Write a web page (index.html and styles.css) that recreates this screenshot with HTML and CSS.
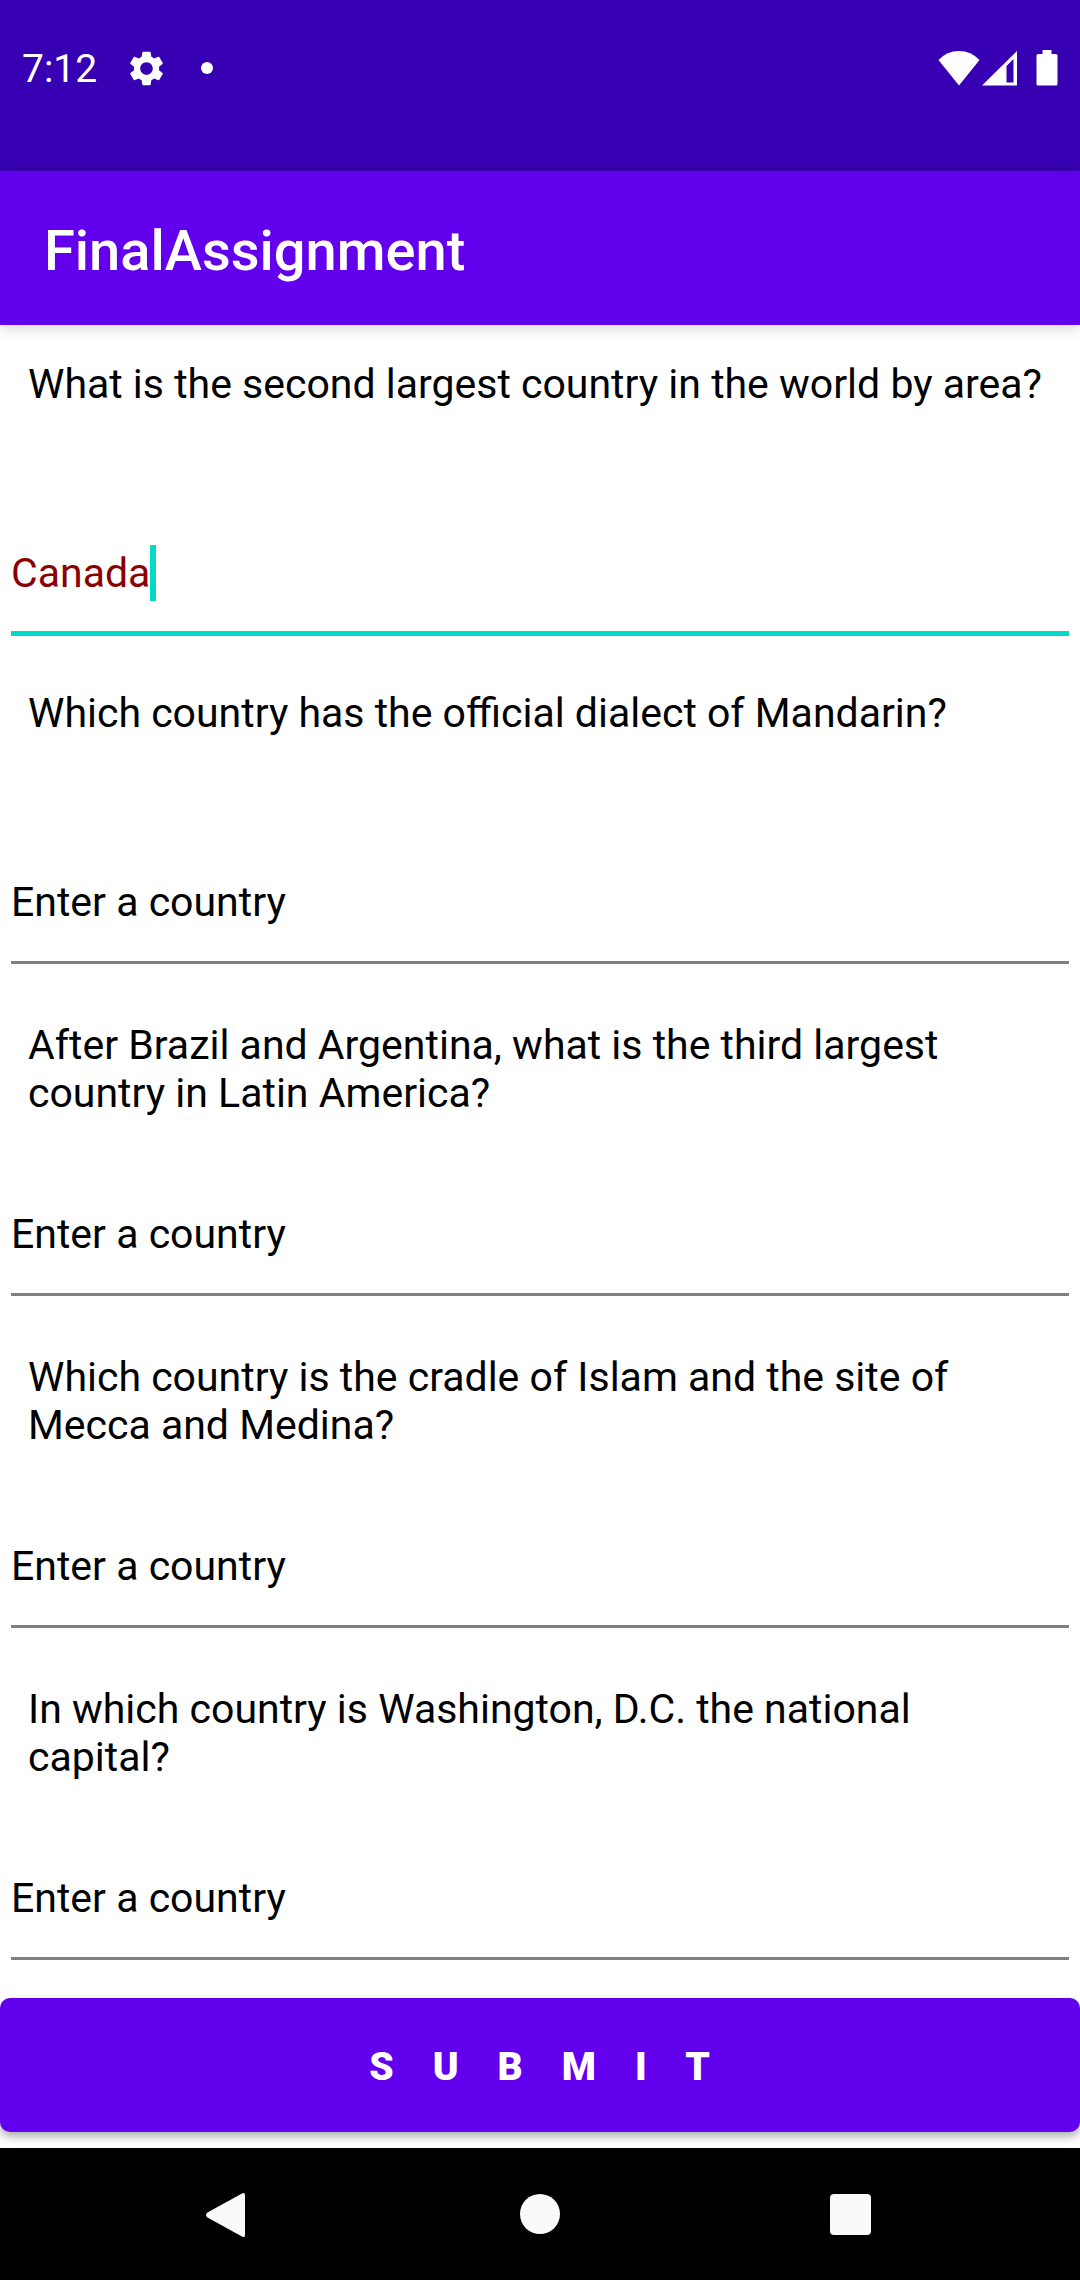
FILE: index.html
```html
<!DOCTYPE html>
<html lang="en">
<head>
<meta charset="utf-8">
<meta name="viewport" content="width=device-width, initial-scale=1">
<title>FinalAssignment</title>
<link rel="stylesheet" href="styles.css">
</head>
<body>
<div class="status-bar">
  <div class="status-left">
    <span class="time">7:12</span>
    <svg class="gear" viewBox="2 2 20 20" aria-hidden="true"><path fill="currentColor" d="M19.14 12.94c.04-.3.06-.61.06-.94 0-.32-.02-.64-.07-.94l2.03-1.58c.18-.14.23-.41.12-.61l-1.92-3.32c-.12-.22-.37-.29-.59-.22l-2.39.96c-.5-.38-1.03-.7-1.62-.94l-.36-2.54c-.04-.24-.24-.41-.48-.41h-3.84c-.24 0-.43.17-.47.41l-.36 2.54c-.59.24-1.13.57-1.62.94l-2.39-.96c-.22-.08-.47 0-.59.22L2.74 8.87c-.12.21-.08.47.12.61l2.03 1.58c-.05.3-.09.63-.09.94s.02.64.07.94l-2.03 1.58c-.18.14-.23.41-.12.61l1.92 3.32c.12.22.37.29.59.22l2.39-.96c.5.38 1.03.7 1.62.94l.36 2.54c.05.24.24.41.48.41h3.84c.24 0 .44-.17.47-.41l.36-2.54c.59-.24 1.13-.56 1.62-.94l2.39.96c.22.08.47 0 .59-.22l1.92-3.32c.12-.22.07-.47-.12-.61l-2.01-1.58zM12 15.6c-1.98 0-3.6-1.62-3.6-3.6s1.62-3.6 3.6-3.6 3.6 1.62 3.6 3.6-1.62 3.6-3.6 3.6z"/></svg>
    <span class="dot"></span>
  </div>
  <div class="status-right">
    <svg class="wifi" viewBox="0 0 42 36" aria-hidden="true"><path fill="currentColor" d="M21 35.500L.5 10Q9 1 21 1t20.500 9z"/></svg>
    <svg class="signal" viewBox="0 0 36 36" aria-hidden="true"><path fill="currentColor" fill-rule="evenodd" d="M0 35.500L35 1v34.500zM24.500 16v16.500H31.500V9z"/></svg>
    <svg class="battery" viewBox="0 0 22 36" aria-hidden="true"><path fill="currentColor" d="M6.500 0h9v4H20q1.500 0 1.500 1.500v28.500q0 1.500-1.500 1.500H2q-1.500 0-1.500-1.500V5.500Q.5 4 2 4h4.500z"/></svg>
  </div>
</div>
<header class="app-bar"><h1>FinalAssignment</h1></header>
<main>
  <form class="quiz">
    <div class="question">
      <label for="q1">What is the second largest country in the world by area?</label>
      <div class="field field-active"><input id="q1" type="text" value="Canada"><span class="caret"></span></div>
    </div>
    <div class="question">
      <label for="q2">Which country has the official dialect of Mandarin?</label>
      <div class="field"><input id="q2" type="text" placeholder="Enter a country"></div>
    </div>
    <div class="question">
      <label for="q3">After Brazil and Argentina, what is the third largest country in Latin America?</label>
      <div class="field"><input id="q3" type="text" placeholder="Enter a country"></div>
    </div>
    <div class="question">
      <label for="q4">Which country is the cradle of Islam and the site of Mecca and Medina?</label>
      <div class="field"><input id="q4" type="text" placeholder="Enter a country"></div>
    </div>
    <div class="question">
      <label for="q5">In which country is Washington, D.C. the national capital?</label>
      <div class="field"><input id="q5" type="text" placeholder="Enter a country"></div>
    </div>
    <button class="submit" type="submit">SUBMIT</button>
  </form>
</main>
<nav class="nav-bar">
  <button type="button" aria-label="Back"><svg viewBox="0 0 44 46" aria-hidden="true"><path fill="currentColor" d="M1.500 20.500L36 1.500Q39 0 39 3v40q0 3-3 1.500L1.500 25.500q-3-2.500 0-5z"/></svg></button>
  <button type="button" aria-label="Home"><svg viewBox="0 0 44 46" aria-hidden="true"><circle fill="currentColor" cx="22" cy="22" r="20"/></svg></button>
  <button type="button" aria-label="Overview"><svg viewBox="0 0 44 46" aria-hidden="true"><rect fill="currentColor" x="0" y="2" width="41" height="41" rx="4"/></svg></button>
</nav>
</body>
</html>
```
FILE: styles.css
```css
* {
  box-sizing: border-box;
}

body {
  margin: 0;
  min-height: 100vh;
  display: flex;
  flex-direction: column;
  background: #fff;
  color: #000;
  font-family: Roboto, "Noto Sans", sans-serif;
  font-size: 41px;
  line-height: 48px;
}

.status-bar {
  display: flex;
  justify-content: space-between;
  padding: 44px 22px 79px;
  background: #3700b3;
  color: #fff;
}

.status-left,
.status-right {
  display: flex;
  align-items: center;
}

.time {
  margin-right: 32px;
  padding-top: 2px;
  font-size: 39px;
  line-height: 46px;
}

.gear {
  width: 35px;
  height: 35px;
  margin-right: 37px;
}

.dot {
  width: 12px;
  height: 12px;
  border-radius: 50%;
  background: currentColor;
}

.wifi {
  width: 42px;
  height: 36px;
  margin-right: 2px;
}

.signal {
  width: 36px;
  height: 36px;
  margin-right: 18px;
}

.battery {
  width: 22px;
  height: 36px;
}

.app-bar {
  padding: 48px 44px 42px;
  background: #6200ee;
  color: #fff;
  box-shadow: 0 2px 14px rgba(0, 0, 0, 0.2);
}

.app-bar h1 {
  margin: 0;
  font-size: 56px;
  font-weight: 500;
  line-height: 64px;
}

.quiz {
  display: flex;
  flex-direction: column;
}

.question {
  padding-top: 35px;
}

.question label {
  display: block;
  min-height: 96px;
  margin: 0 28px 92px;
}

.field {
  display: flex;
  align-items: center;
  margin: 0 11px 22px;
  padding-bottom: 34px;
  border-bottom: 3px solid #808080;
}

.field input {
  flex: 1;
  height: 50px;
  padding: 0;
  border: 0;
  outline: 0;
  background: none;
  color: inherit;
  font: inherit;
}

.field input::placeholder {
  color: #000;
  opacity: 1;
}

.field-active {
  margin-bottom: 18px;
  padding-bottom: 33px;
  border-bottom: 5px solid #03dac5;
  color: #8b0000;
}

.field-active input {
  flex: none;
  field-sizing: content;
}

.caret {
  width: 6px;
  height: 56px;
  margin: -4px 0;
  background: #03dac5;
}

.submit {
  margin: 16px 0;
  padding: 45px 0 41px 38px;
  border: 0;
  border-radius: 10px;
  background: #6200ee;
  color: #fff;
  box-shadow: 0 5px 8px rgba(0, 0, 0, 0.3);
  font: 900 39px/48px Roboto, "Noto Sans", sans-serif;
  letter-spacing: 39px;
}

.nav-bar {
  flex: 1;
  display: flex;
  justify-content: center;
  gap: 268px;
  padding: 44px 0 42px;
  background: #000;
  color: #fafafa;
  z-index: 1;
}

.nav-bar button {
  padding: 0;
  border: 0;
  background: none;
  color: inherit;
  line-height: 0;
}

.nav-bar svg {
  display: block;
  width: 44px;
  height: 46px;
}
```
